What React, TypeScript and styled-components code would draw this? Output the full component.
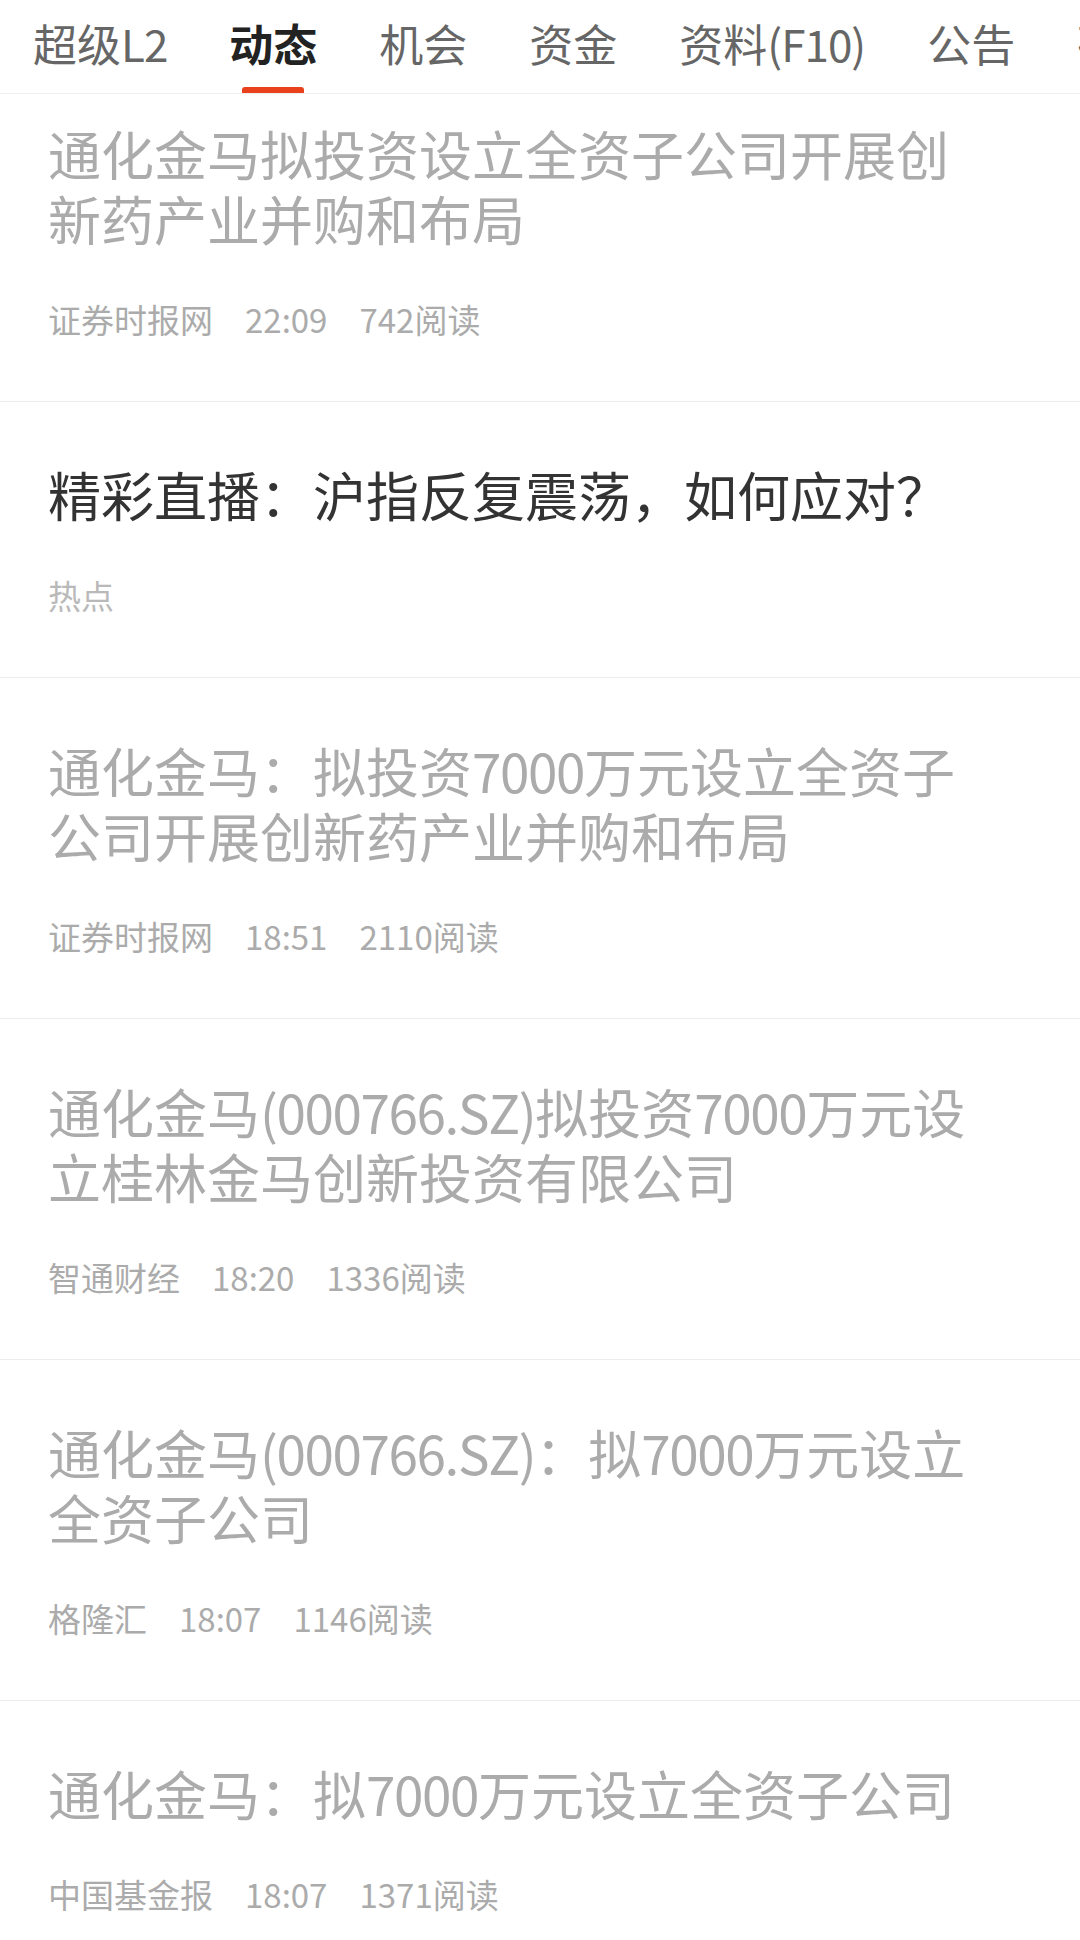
import React from "react";
import styled, { createGlobalStyle } from "styled-components";

const GlobalStyle = createGlobalStyle`
  html, body {
    margin: 0;
    padding: 0;
    background: #ffffff;
  }
  body {
    font-family: "Noto Sans CJK SC", "Noto Sans", sans-serif;
  }
  #root {
    width: 1080px;
    height: 1940px;
    overflow: hidden;
  }
`;

const Page = styled.div`
  width: 1080px;
  height: 1940px;
  display: flex;
  flex-direction: column;
  background: #ffffff;
  overflow: hidden;
`;

const TabBar = styled.nav`
  flex-shrink: 0;
  height: 93px;
  display: flex;
  gap: 62px;
  padding-left: 33px;
  border-bottom: 1px solid #efefef;
  overflow: hidden;
  white-space: nowrap;
  background: #ffffff;
`;

const Tab = styled.div`
  flex-shrink: 0;
  height: 93px;
  display: flex;
  flex-direction: column;
  align-items: center;
`;

const TabLabel = styled.span<{ $active?: boolean }>`
  padding-top: 21px;
  font-size: 44px;
  line-height: 44px;
  color: ${(p) => (p.$active ? "#222222" : "#666666")};
  font-weight: ${(p) => (p.$active ? 700 : 400)};
`;

const TabIndicator = styled.span`
  margin-top: auto;
  width: 62px;
  height: 6px;
  border-radius: 3px 3px 0 0;
  background: #e8411b;
`;

const Viewport = styled.div`
  flex: 1;
  overflow: hidden;
`;

const List = styled.ul`
  list-style: none;
  margin: -33px 0 0 0;
  padding: 0;
`;

const Item = styled.li`
  padding: 60px 92px 59px 48px;
  border-bottom: 1px solid #ececec;
  display: flex;
  flex-direction: column;
  gap: 45px;
`;

const Title = styled.h3<{ $read?: boolean }>`
  margin: 0;
  font-size: 53px;
  line-height: 65px;
  font-weight: 400;
  color: ${(p) => (p.$read ? "#ababab" : "#333333")};
  white-space: nowrap;
`;

const TitleLine = styled.span`
  display: block;
`;

const Latin = styled.span<{ $tight: number }>`
  letter-spacing: ${(p) => p.$tight}px;
`;

const Meta = styled.div`
  display: flex;
  gap: 32px;
  font-size: 33px;
  line-height: 46px;
  color: #ababab;
`;

const MetaPart = styled.span<{ $hot?: boolean }>`
  color: ${(p) => (p.$hot ? "#b9b9b9" : "#ababab")};
`;

type News = {
  lines: string[];
  read: boolean;
  meta: string[];
  hot?: boolean;
};

const tabs = ["超级L2", "动态", "机会", "资金", "资料(F10)", "公告", "研报"];

const news: News[] = [
  {
    lines: ["通化金马拟投资设立全资子公司开展创", "新药产业并购和布局"],
    read: true,
    meta: ["证券时报网", "22:09", "742阅读"],
  },
  {
    lines: ["精彩直播：沪指反复震荡，如何应对？"],
    read: false,
    meta: ["热点"],
    hot: true,
  },
  {
    lines: ["通化金马：拟投资7000万元设立全资子", "公司开展创新药产业并购和布局"],
    read: true,
    meta: ["证券时报网", "18:51", "2110阅读"],
  },
  {
    lines: ["通化金马(000766.SZ)拟投资7000万元设", "立桂林金马创新投资有限公司"],
    read: true,
    meta: ["智通财经", "18:20", "1336阅读"],
  },
  {
    lines: ["通化金马(000766.SZ)：拟7000万元设立", "全资子公司"],
    read: true,
    meta: ["格隆汇", "18:07", "1146阅读"],
  },
  {
    lines: ["通化金马：拟7000万元设立全资子公司"],
    read: true,
    meta: ["中国基金报", "18:07", "1371阅读"],
  },
];

function withLatin(text: string, tight: number) {
  const parts = text.split(/([\x20-\x7e]+)/).filter((s) => s.length > 0);
  return parts.map((p, i) =>
    /^[\x20-\x7e]+$/.test(p) ? (
      <Latin key={i} $tight={tight}>
        {p}
      </Latin>
    ) : (
      <React.Fragment key={i}>{p}</React.Fragment>
    )
  );
}

export default function App() {
  return (
    <Page>
      <GlobalStyle />
      <TabBar>
        {tabs.map((t) => {
          const active = t === "动态";
          return (
            <Tab key={t}>
              <TabLabel $active={active}>{withLatin(t, -1)}</TabLabel>
              {active && <TabIndicator />}
            </Tab>
          );
        })}
      </TabBar>
      <Viewport>
        <List>
          {news.map((n, i) => (
            <Item key={i}>
              <Title $read={n.read}>
                {n.lines.map((l, j) => (
                  <TitleLine key={j}>{withLatin(l, -1.4)}</TitleLine>
                ))}
              </Title>
              <Meta>
                {n.meta.map((m, j) => (
                  <MetaPart key={j} $hot={n.hot}>
                    {m}
                  </MetaPart>
                ))}
              </Meta>
            </Item>
          ))}
        </List>
      </Viewport>
    </Page>
  );
}
